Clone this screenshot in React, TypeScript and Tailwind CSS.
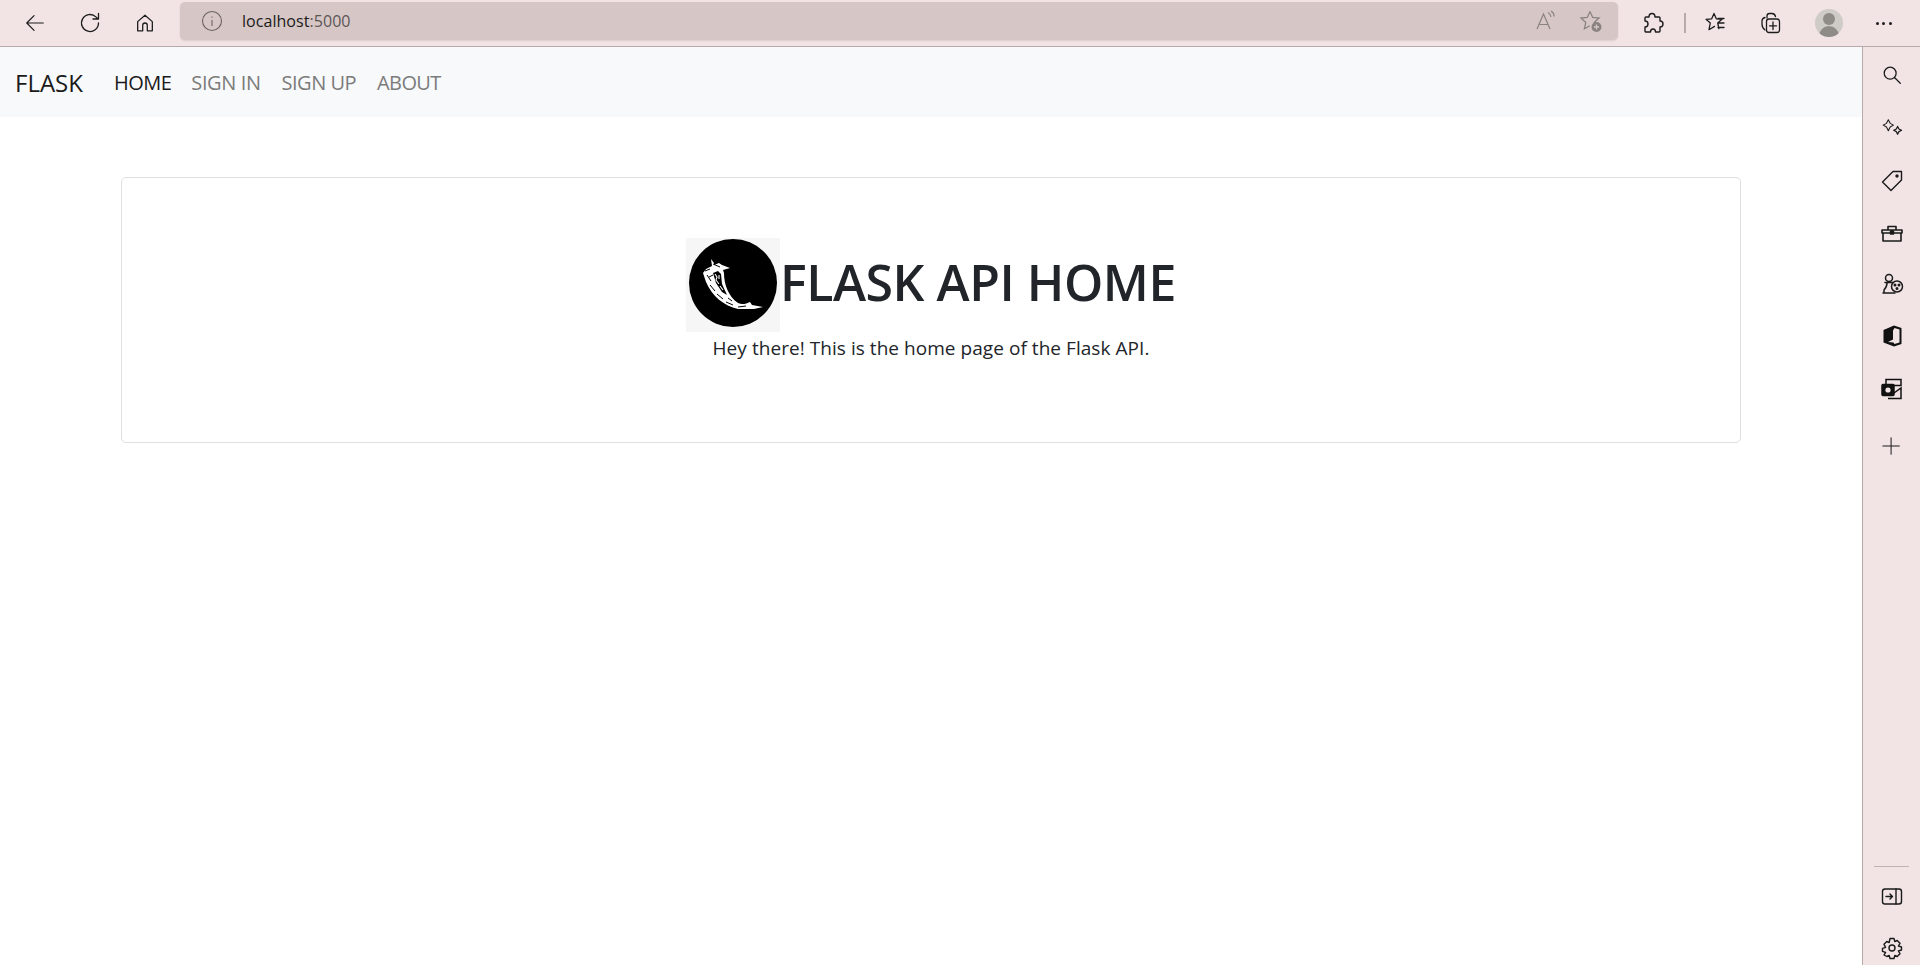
import React from "react";

const S = ({ children, w = 24, vb = "0 0 24 24", cls = "" }: { children: React.ReactNode; w?: number; vb?: string; cls?: string }) => (
  <svg width={w} height={w} viewBox={vb} fill="none" stroke="currentColor" strokeWidth={1.4} strokeLinejoin="round" strokeLinecap="round" className={cls}>
    {children}
  </svg>
);

function FlaskLogo() {
  return (
    <div className="w-[94px] h-[94px] bg-[#f6f6f6] flex items-center justify-center shrink-0">
      <svg width="94" height="94" viewBox="0 0 94 94">
        <circle cx="47" cy="45" r="44" fill="#000" />
        <path d="M25 21 L28 25 L28 27 L33 25 L36 27 L44 30 L37 32 L38 35 C38 46 42 58 52 65 C56 67 60 66 64 64 L66 67 L77 69 L68 71 L52 71 C38 68 26 58 20 44 L17 35 L20 31 L26 28 Z" fill="#fff" />
        <path d="M27 35 L32 33 L35 36 L36 46 L41 57 L36 54 L30 45 Z" fill="#000" />
        <path d="M29 36 L31 39 L30 42 L33 46 M33 37 L33 41 M34 48 L37 52" stroke="#fff" strokeWidth="1.1" fill="none" />
        <path d="M21 37 L25 43 M24 47 L29 53 M31 56 L37 61 M40 64 L47 67 M52 69 L60 68 M19 33 L24 31 M27 26 L34 29 M42 60 L46 63 M23 39 L27 37" stroke="#000" strokeWidth="1" fill="none" />
      </svg>
    </div>
  );
}

const SideIcon = ({ children }: { children: React.ReactNode }) => (
  <div className="h-[24px] w-[24px] flex items-center justify-center text-[#1a1a1a]">{children}</div>
);

export default function App() {
  return (
    <div className="h-[965px] w-[1920px] overflow-hidden flex flex-col bg-white font-['Open_Sans','Noto_Sans',sans-serif]">
      <header className="h-[47px] shrink-0 bg-[#f2e4e4] flex items-center border-b border-[#b9aaaa] relative">
        <div className="flex items-center pl-[24px] gap-[32px] text-[#1c1c1c]">
          <S w={22}><path d="M21 12H3.5M11 4l-8 8 8 8" strokeWidth={1.3} /></S>
          <S w={24}><path d="M20.5 12a8.5 8.5 0 1 1-2.6-6.1L20 8M20.5 2.5V8H15" strokeWidth={1.3} /></S>
          <S w={22}><path d="M4 20.5V10.5L12 3.5l8 7v10h-5.5v-6a2.5 2.5 0 0 0-5 0v6Z" strokeWidth={1.4} /></S>
        </div>
        <div className="ml-[24px] w-[1438px] h-[38px] mt-[-5px] rounded-[5px] bg-[#d6c7c6] flex items-center pl-[21px] pr-[15px] shadow-[0_1px_2px_rgba(0,0,0,0.1)]">
          <svg width="22" height="22" viewBox="0 0 22 22" fill="none" stroke="#6a6262" strokeWidth="1.1"><circle cx="11" cy="11" r="9.5" /><path d="M11 10v6M11 6.5v1.2" /></svg>
          <span className="ml-[19px] text-[16px] text-[#1a1a1a] tracking-[0.05px]">localhost<span className="text-[#5b5656]">:5000</span></span>
          <div className="ml-auto flex items-center gap-[22px] text-[#8a8382]">
            <svg width="24" height="24" viewBox="0 0 24 24" fill="none" stroke="currentColor" strokeWidth="1.2"><path d="M4 20 10.500 5 17 20M6 15.500h9" /><path d="M15 3.500c1.700.8 2.700 2.300 3 4.500M18 2c2 1 3 3 3.200 5.500" /></svg>
            <svg width="24" height="24" viewBox="0 0 24 24" fill="none" stroke="currentColor" strokeWidth="1.3"><path d="M11 2.5l2.700 6 6.300.6-4.800 4.300 1 3.600M11 2.500l-2.700 6-6.300.6 4.800 4.300-1.400 6.300 5.400-3" /><circle cx="17.500" cy="18" r="5" fill="currentColor" stroke="none" /><path d="M17.500 15.500v5M15 18h5" stroke="#d6c7c6" /></svg>
          </div>
        </div>
        <div className="flex items-center ml-[23px] text-[#1c1c1c]">
          <S w={24}><path d="M8 6C8 3 9.500 2.500 11 2.500C13 2.500 14 4 14 6H18a1 1 0 0 1 1 1V10C21 10 22 11 22 13C22 15 21 16 19 16V20a1 1 0 0 1-1 1H14.500C14.500 19 13.500 18 12 18C10.500 18 9.500 19 9.500 21H5a1 1 0 0 1-1-1V16C5.500 16 7 15 7 13C7 11 5.500 10 4 10V7a1 1 0 0 1 1-1Z" strokeWidth={1.4} /></S>
          <div className="w-[1.5px] h-[20px] bg-[#b5abab] ml-[19px]" />
          <div className="ml-[18px]"><S w={24}><path d="M10 2.500l2.300 5.300 5.700.5-4.300 3.700 1.200 5.500M10 2.500 7.700 7.800 2 8.300l4.300 3.700-1.300 6.700 5.500-3.300M14 7.500h6M14 12h6M14 16.500h6" strokeWidth={1.3} /></S></div>
          <div className="ml-[31px]"><S w={24}><path d="M8 7V5a2.500 2.500 0 0 1 2.500-2.500H13c2 0 3 1 3.500 3M6 6.500c-2 .5-3 1.500-3 3.500v3c0 2 1.500 5 3 6" strokeWidth={1.3} /><rect x="7.500" y="8" width="13" height="13.500" rx="2.500" strokeWidth={1.3} /><path d="M14 11v7.500M10.500 14.800h7" strokeWidth={1.3} /></S></div>
          <div className="ml-[32px] w-[28px] h-[28px] rounded-full bg-[#cfcbc7] overflow-hidden flex flex-col items-center">
            <div className="w-[12px] h-[12px] rounded-full bg-[#8f8b87] mt-[4px]" />
            <div className="w-[20px] h-[12px] rounded-t-full bg-[#8f8b87] mt-[1px]" />
          </div>
          <div className="ml-[33px] flex gap-[3.500px]">
            <i className="w-[3px] h-[3px] rounded-full bg-[#1c1c1c] block" />
            <i className="w-[3px] h-[3px] rounded-full bg-[#1c1c1c] block" />
            <i className="w-[3px] h-[3px] rounded-full bg-[#1c1c1c] block" />
          </div>
        </div>
      </header>

      <div className="flex flex-1 min-h-0">
        <main className="flex-1 min-w-0">
          <nav className="h-[70px] bg-[#f8f9fa] flex items-center pl-[15px] pt-[2px] text-[20px]">
            <span className="text-[24px] text-[#1a1a1a] font-normal">FLASK</span>
            <span className="ml-[31px] text-[#1a1a1a] tracking-[-0.5px]">HOME</span>
            <span className="ml-[20px] text-[#7b7b7b] tracking-[-0.4px]">SIGN IN</span>
            <span className="ml-[21px] text-[#7b7b7b] tracking-[-0.5px]">SIGN UP</span>
            <span className="ml-[21px] text-[#7b7b7b] tracking-[-0.6px]">ABOUT</span>
          </nav>
          <section className="mx-[121px] mt-[60px] h-[266px] border border-[#dfdfdf] rounded-[5px] flex flex-col items-center pt-[60px]">
            <div className="flex items-center h-[94px]">
              <FlaskLogo />
              <h1 className="text-[50px] leading-none font-semibold text-[#212529] mt-[-6px] tracking-[-0.45px]">FLASK API HOME</h1>
            </div>
            <p className="text-[19px] text-[#212529] mt-[2px] tracking-[0.05px]">Hey there! This is the home page of the Flask API.</p>
          </section>
        </main>
        <aside className="w-[58px] shrink-0 bg-[#f2e4e4] border-l border-[#b9aaaa] flex flex-col items-center pt-[16px] pb-[5px] text-[#1a1a1a]">
          <div className="flex flex-col items-center gap-[28.3px]">
            <SideIcon><S w={22}><circle cx="10" cy="10" r="6.500" /><path d="M15 15l6 6" /></S></SideIcon>
            <SideIcon><S w={22}><path d="M9 3l2.500 5L16 10.500 11.500 13 9 18l-2.500-5L2 10.500 6.500 8Z" transform="scale(.8) translate(1,2)" /><path d="M17.500 13l1.500 3 3 1.500-3 1.500-1.500 3-1.500-3-3-1.500 3-1.500Z" transform="translate(1.500,-1) scale(.95)" /></S></SideIcon>
            <SideIcon><S w={24}><path d="M2.500 14 13 3.500h8.500V12L11 22.500Z" /><circle cx="17" cy="8" r="1" fill="currentColor" /></S></SideIcon>
            <SideIcon><S w={24}><path d="M2 10h20v3H2ZM3 13v8h18v-8M8 10V6.500h8V10" strokeWidth={1.6} /><rect x="10.500" y="11" width="3" height="3" fill="currentColor" /></S></SideIcon>
            <SideIcon><S w={24}><circle cx="9" cy="6" r="3.500" strokeWidth={1.5} /><path d="M5 10.500h8M7 11c0 3-1 5-3 7v3h11M3 21h10" strokeWidth={1.5} /><circle cx="17" cy="14.500" r="5.500" strokeWidth={1.5} /><circle cx="15" cy="13" r=".8" fill="currentColor" /><circle cx="19" cy="13" r=".8" fill="currentColor" /><circle cx="17" cy="16.500" r=".8" fill="currentColor" /></S></SideIcon>
            <SideIcon><svg width="24" height="24" viewBox="0 0 24 24"><path d="M14 1.500 21.500 4V20L14 22.500 3.500 18.500V6Z" fill="#111" /><path d="M14.500 4l5 1.500V18.500L14.500 20l-1-1.500L8 18l5-2.500V6.500Z" fill="#f2e4e4" /></svg></SideIcon>
            <SideIcon><svg width="24" height="24" viewBox="0 0 24 24" fill="none" stroke="#111" strokeWidth="1.5"><rect x="6" y="2.500" width="15" height="6" /><path d="M8 21.500h13V11l-7 5" /><rect x="2" y="7.500" width="12" height="11" rx="1" fill="#111" /><circle cx="8" cy="13" r="2.600" fill="#f2e4e4" stroke="none" /></svg></SideIcon>
            <div className="mt-[5px]"><SideIcon><S w={22}><path d="M11 3v18M2 12h18" strokeWidth={1.100} /></S></SideIcon></div>
          </div>
          <div className="mt-auto w-[35px] h-px bg-[#bfb2b2]" />
          <div className="mt-[18px]"><S w={24}><rect x="2.500" y="4" width="19" height="15" rx="2.500" /><path d="M16 4v15M6 11.500h6.500M10 9l2.500 2.500L10 14" /></S></div>
          <div className="mt-[27px]"><S w={24}><path d="M10 2.500h4l.8 3 2.400-1 2.800 2.800-1.600 2.700 3.100 1v3l-3.100 1 1.600 2.700-2.800 2.800-2.400-1-.8 3h-4l-.8-3-2.400 1L4 19l1.600-2.700-3.100-1v-3l3.100-1L4 8.300l2.800-2.800 2.400 1Z" /><circle cx="12" cy="12" r="3" /></S></div>
        </aside>
      </div>
    </div>
  );
}
